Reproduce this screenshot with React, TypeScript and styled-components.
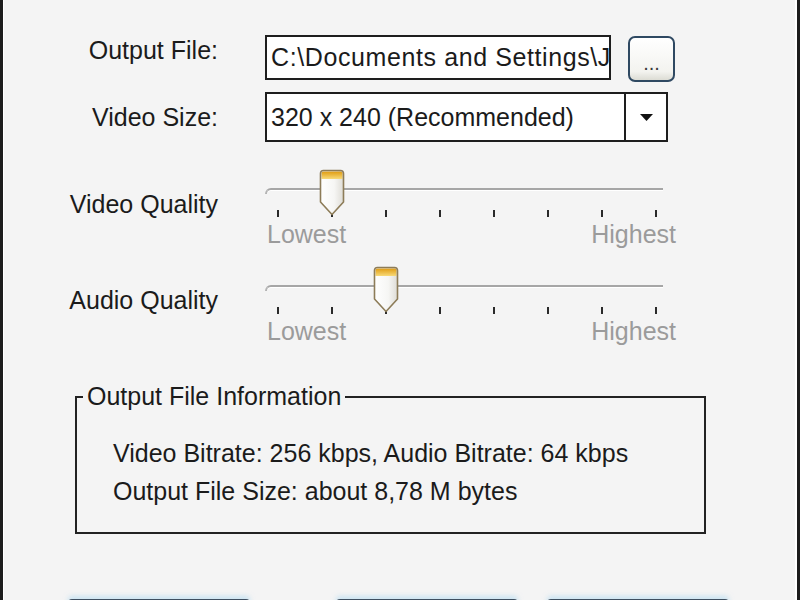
import { FunctionComponent } from "react";
import styled, { createGlobalStyle } from "styled-components";

const GlobalStyle = createGlobalStyle`
    html, body {
        margin: 0;
        padding: 0;
        overflow: hidden;
        background: #f4f4f4;
    }

    body {
        font-family: "Liberation Sans", Arial, sans-serif;
    }
`;

const Dialog = styled.div`
    box-sizing: border-box;
    width: 800px;
    height: 600px;
    overflow: hidden;
    padding-top: 35px;
    background: #f4f4f4;
    border-left: 3px solid #1c1c1c;
    border-right: 3px solid #1c1c1c;
    box-shadow: inset 1px 0 #ffffff, inset -2px 0 #ffffff;
    font-size: 25px;
    line-height: 29px;
    color: #1b1b1b;
`;

const FieldRow = styled.div<{ $top: number }>`
    display: grid;
    grid-template-columns: 215px auto;
    column-gap: 47px;
    align-items: start;
    margin-top: ${(p) => p.$top}px;
`;

const FieldLabel = styled.div<{ $offset: number }>`
    text-align: right;
    white-space: nowrap;
    padding-top: ${(p) => p.$offset}px;
`;

const FileControls = styled.div`
    display: flex;
    align-items: flex-start;
    gap: 17px;
`;

const PathBox = styled.div`
    box-sizing: border-box;
    width: 346px;
    height: 45px;
    padding: 6px 0 0 4px;
    background: #ffffff;
    border: 2px solid #1e1e1e;
    letter-spacing: 0.6px;
    white-space: nowrap;
    overflow: hidden;
`;

const BrowseButton = styled.button`
    box-sizing: border-box;
    width: 47px;
    height: 46px;
    margin-top: 1px;
    padding: 8px 0 0;
    border: 2px solid #2f4962;
    border-radius: 7px;
    background: linear-gradient(#ffffff, #f3f3ef 80%, #dcdcd4);
    font-family: "Liberation Sans", Arial, sans-serif;
    font-size: 20px;
    line-height: 20px;
    color: #3a3a3a;
`;

const SelectBox = styled.div`
    box-sizing: border-box;
    display: flex;
    width: 403px;
    height: 50px;
    background: #ffffff;
    border: 2px solid #1e1e1e;
`;

const SelectValue = styled.div`
    flex: 1;
    padding: 9px 0 0 4px;
    white-space: nowrap;
    border-right: 2px solid #1e1e1e;
`;

const SelectArrow = styled.div`
    width: 40px;
    display: flex;
    align-items: center;
    justify-content: center;
`;

const SliderBlock = styled.div`
    width: 411px;
`;

const Rail = styled.div`
    position: relative;
    box-sizing: border-box;
    height: 48px;
    padding-top: 19px;
`;

const Track = styled.div`
    box-sizing: border-box;
    width: 398px;
    height: 6px;
    border-top: 2px solid #a6a6a6;
    border-left: 2px solid #b4b4b4;
    border-top-left-radius: 6px;
    box-shadow: 0 1px 0 #ffffff inset;
`;

const Ticks = styled.div`
    display: flex;
    justify-content: space-between;
    width: 380px;
    margin: 16px 0 0 12px;
`;

const Tick = styled.span`
    width: 2px;
    height: 7px;
    background: #2a2a2a;
`;

const Thumb = styled.svg`
    position: absolute;
    top: 0;
`;

const ScaleLabels = styled.div`
    display: flex;
    justify-content: space-between;
    margin-top: 3px;
    padding-left: 2px;
    color: #9b9b9b;
`;

const GroupBox = styled.fieldset`
    box-sizing: border-box;
    width: 631px;
    margin: 36px 0 0 72px;
    padding: 0;
    border: 2px solid #222222;
`;

const GroupTitle = styled.legend`
    margin-left: 6px;
    padding: 0 4px;
`;

const GroupBody = styled.div`
    padding: 23px 0 22px 36px;
    line-height: 38px;
`;

const ButtonRow = styled.div`
    display: flex;
    margin-top: 65px;
    padding-left: 65px;
`;

const DialogButton = styled.button<{ $gap: number }>`
    box-sizing: border-box;
    width: 182px;
    height: 46px;
    margin-left: ${(p) => p.$gap}px;
    border: 2px solid #3e4f60;
    border-radius: 4px;
    background: linear-gradient(#ffffff, #ecece6);
    box-shadow: 0 -3px 5px rgba(170, 215, 240, 0.55);
`;

const TICK_COUNT = 8;
const TICK_STEP = 378 / (TICK_COUNT - 1);

interface QualitySliderProps {
    value: number;
}

const QualitySlider: FunctionComponent<QualitySliderProps> = ({ value }) => {
    // thumb is 26px wide, centred over the tick it sits on
    const thumbLeft = value * TICK_STEP;

    return (
        <SliderBlock>
            <Rail>
                <Track />
                <Ticks>
                    {Array.from({ length: TICK_COUNT }).map((_, i) => (
                        <Tick key={i} />
                    ))}
                </Ticks>
                <Thumb width="26" height="47" viewBox="0 0 26 47" style={{ left: thumbLeft }}>
                    <defs>
                        <linearGradient id="thumbBody" x1="0" y1="0" x2="1" y2="0">
                            <stop offset="0" stopColor="#ffffff" />
                            <stop offset="0.6" stopColor="#f6f6f4" />
                            <stop offset="1" stopColor="#dedcd6" />
                        </linearGradient>
                        <linearGradient id="thumbCap" x1="0" y1="0" x2="0" y2="1">
                            <stop offset="0" stopColor="#e09c12" />
                            <stop offset="1" stopColor="#f8da78" />
                        </linearGradient>
                    </defs>
                    <path
                        d="M1.5 4.5 Q1.5 1.5 4.5 1.5 H21.5 Q24.5 1.5 24.5 4.5 V33 L13 45.5 L1.5 33 Z"
                        fill="url(#thumbBody)"
                    />
                    <path d="M2.5 4.5 Q2.5 2.5 4.5 2.5 H21.5 Q23.5 2.5 23.5 4.5 V10 H2.5 Z" fill="url(#thumbCap)" />
                    <path
                        d="M1.5 4.5 Q1.5 1.5 4.5 1.5 H21.5 Q24.5 1.5 24.5 4.5 V33 L13 45.5 L1.5 33 Z"
                        fill="none"
                        stroke="#8d7c58"
                        strokeWidth="1.6"
                        strokeLinejoin="round"
                    />
                </Thumb>
            </Rail>
            <ScaleLabels>
                <span>Lowest</span>
                <span>Highest</span>
            </ScaleLabels>
        </SliderBlock>
    );
};

const App: FunctionComponent = () => {
    return (
        <>
            <GlobalStyle />
            <Dialog>
                <FieldRow $top={0}>
                    <FieldLabel $offset={1}>Output File:</FieldLabel>
                    <FileControls>
                        <PathBox>C:\Documents and Settings\Jim\My Documents\movie.flv</PathBox>
                        <BrowseButton>...</BrowseButton>
                    </FileControls>
                </FieldRow>
                <FieldRow $top={10}>
                    <FieldLabel $offset={11}>Video Size:</FieldLabel>
                    <SelectBox>
                        <SelectValue>320 x 240 (Recommended)</SelectValue>
                        <SelectArrow>
                            <svg width="13" height="7" viewBox="0 0 13 7">
                                <path d="M0 0 H13 L6.5 7 Z" fill="#111111" />
                            </svg>
                        </SelectArrow>
                    </SelectBox>
                </FieldRow>
                <FieldRow $top={27}>
                    <FieldLabel $offset={21}>Video Quality</FieldLabel>
                    <QualitySlider value={1} />
                </FieldRow>
                <FieldRow $top={17}>
                    <FieldLabel $offset={20}>Audio Quality</FieldLabel>
                    <QualitySlider value={2} />
                </FieldRow>
                <GroupBox>
                    <GroupTitle>Output File Information</GroupTitle>
                    <GroupBody>
                        <div>Video Bitrate: 256 kbps, Audio Bitrate: 64 kbps</div>
                        <div>Output File Size: about 8,78 M bytes</div>
                    </GroupBody>
                </GroupBox>
                <ButtonRow>
                    <DialogButton $gap={0} />
                    <DialogButton $gap={86} />
                    <DialogButton $gap={29} />
                </ButtonRow>
            </Dialog>
        </>
    );
};

export default App;
